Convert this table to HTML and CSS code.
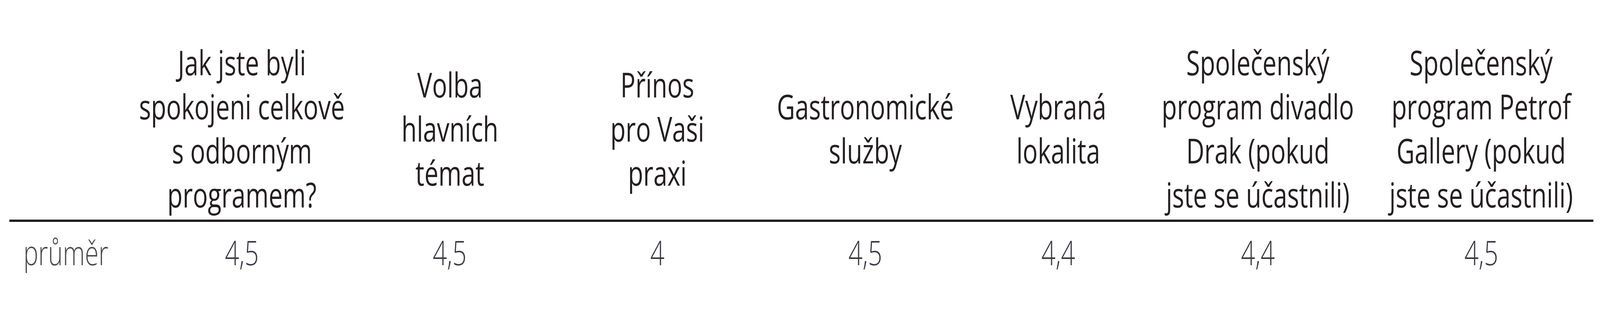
FILE: index.html
```html
<!DOCTYPE html>
<html lang="cs">
<head>
<meta charset="utf-8">
<title>Hodnocení</title>
<link rel="stylesheet" href="styles.css">
</head>
<body>
<table class="survey">
  <colgroup>
    <col class="c0"><col class="c1"><col class="c2"><col class="c3"><col class="c4"><col class="c5"><col class="c6"><col class="c7">
  </colgroup>
  <thead>
    <tr>
      <th class="blank"></th>
      <th><div class="cell"><span class="txt">Jak jste byli<br>spokojeni celkově<br>s odborným<br>programem?</span></div></th>
      <th><div class="cell"><span class="txt">Volba<br>hlavních<br>témat</span></div></th>
      <th><div class="cell"><span class="txt">Přínos<br>pro Vaši<br>praxi</span></div></th>
      <th><div class="cell"><span class="txt">Gastronomické<br>služby</span></div></th>
      <th><div class="cell"><span class="txt">Vybraná<br>lokalita</span></div></th>
      <th><div class="cell"><span class="txt">Společenský<br>program divadlo<br>Drak (pokud<br>jste se účastnili)</span></div></th>
      <th><div class="cell"><span class="txt">Společenský<br>program Petrof<br>Gallery (pokud<br>jste se účastnili)</span></div></th>
    </tr>
  </thead>
  <tbody>
    <tr>
      <td class="label"><span class="txt">průměr</span></td>
      <td><div class="cell"><span class="txt">4,5</span></div></td>
      <td><div class="cell"><span class="txt">4,5</span></div></td>
      <td><div class="cell"><span class="txt">4</span></div></td>
      <td><div class="cell"><span class="txt">4,5</span></div></td>
      <td><div class="cell"><span class="txt">4,4</span></div></td>
      <td><div class="cell"><span class="txt">4,4</span></div></td>
      <td><div class="cell"><span class="txt">4,5</span></div></td>
    </tr>
  </tbody>
</table>
</body>
</html>
```

FILE: styles.css
```css
html, body {
  margin: 0;
  padding: 0;
  background: #ffffff;
}

body {
  font-family: "Open Sans", "Noto Sans", "Liberation Sans", sans-serif;
}

.survey {
  margin-left: 0.583vw;
  width: 98.999vw;
  table-layout: fixed;
  border-collapse: separate;
  border-spacing: 0;
  font-size: 87px;
  line-height: 113px;
}

.c0 { width: 8.128%; }
.c1 { width: 13.093%; }
.c2 { width: 13.167%; }
.c3 { width: 13.056%; }
.c4 { width: 13.203%; }
.c5 { width: 11.144%; }
.c6 { width: 14.049%; }
.c7 { width: 14.160%; }

.cell {
  display: flex;
  justify-content: center;
}

.txt {
  display: inline-block;
  flex-shrink: 0;
  text-align: center;
  white-space: nowrap;
  transform-origin: 50% 50%;
}

.survey th {
  font-weight: 400;
  color: #231f20;
  vertical-align: middle;
  padding: 103px 0 8px 0;
  border-bottom: 6px solid #231f20;
}

.survey td {
  font-weight: 300;
  color: #3a3a44;
  vertical-align: top;
  padding: 21px 0 0 0;
}

.survey td.label {
  text-align: left;
  padding-left: 0.874vw;
  color: #4a4a4a;
}

.survey td.label .txt {
  transform-origin: 0 50%;
}

@media (max-width: 4800px) {
  .txt { transform: scaleX(0.735); }
}
```
